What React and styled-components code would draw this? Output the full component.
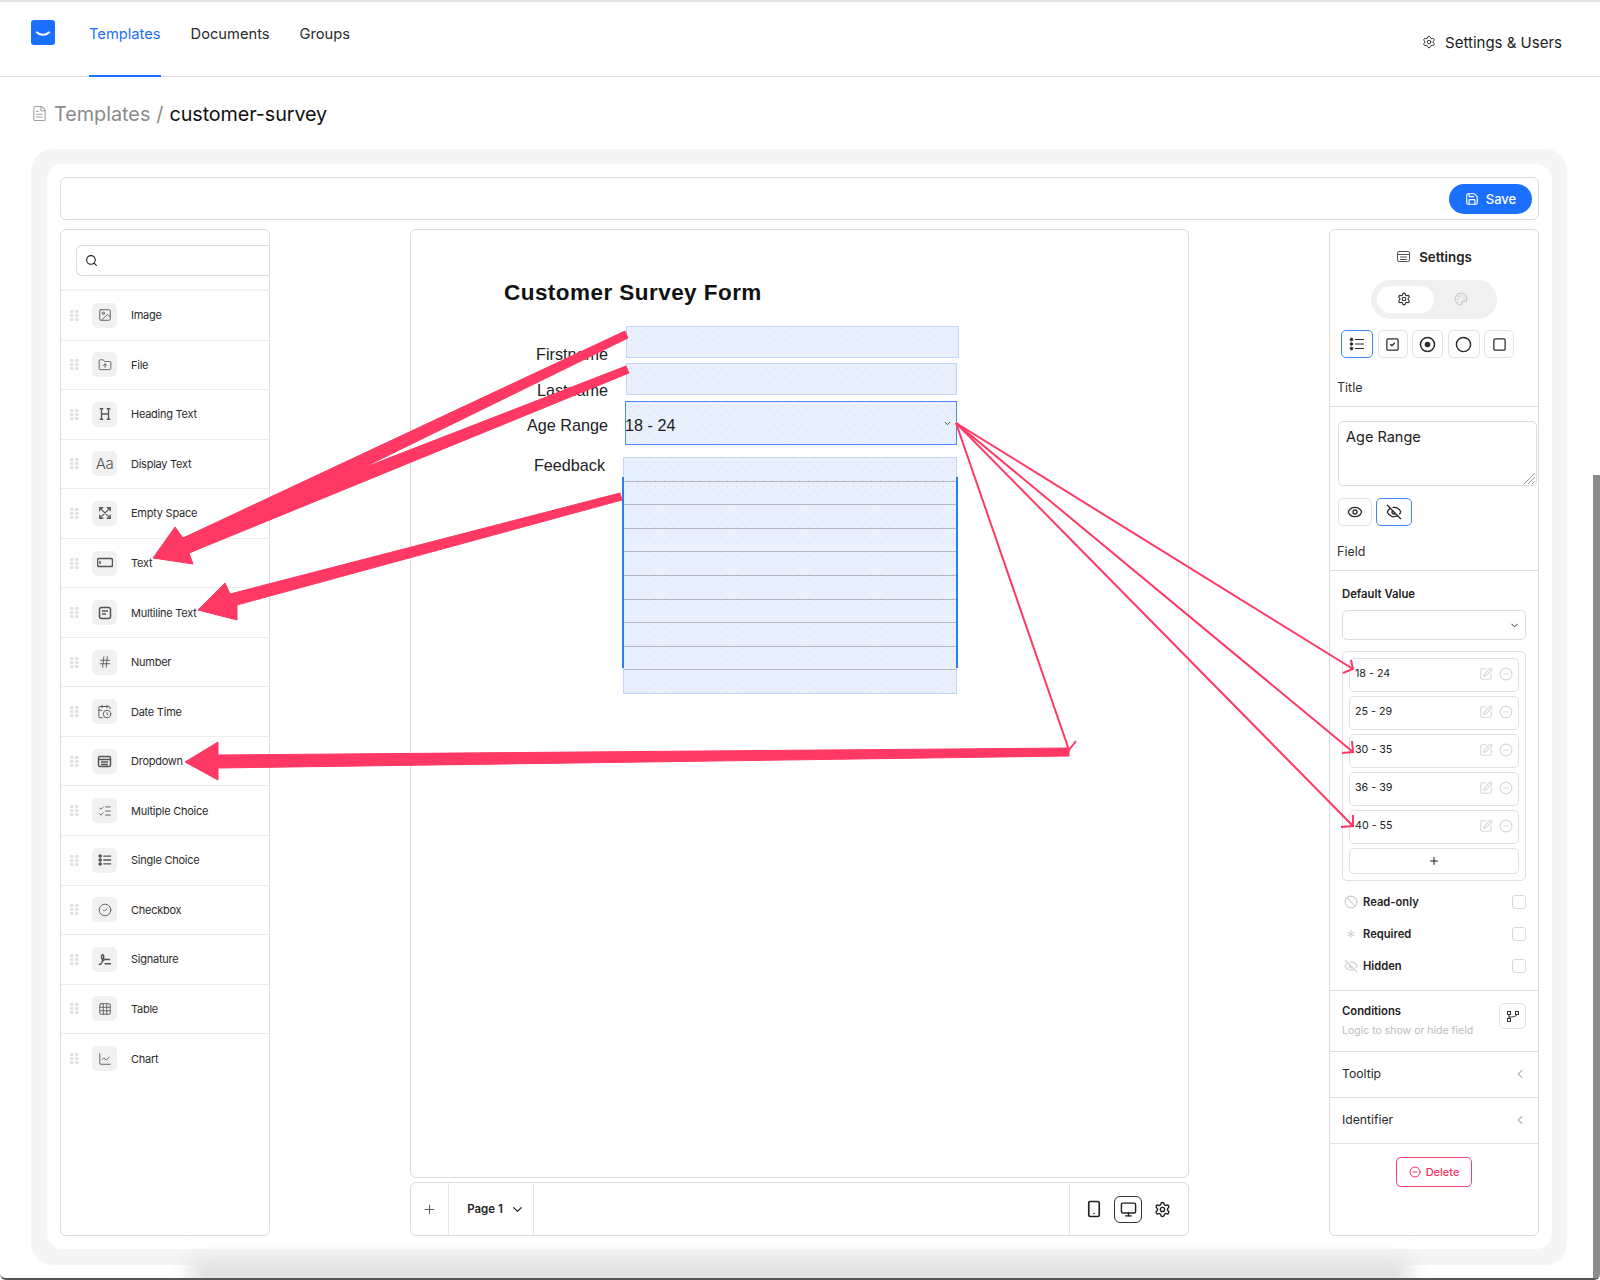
import styled, { createGlobalStyle } from 'styled-components';
import {
    Asterisk, Ban, CalendarClock, ChevronDown, ChevronLeft, Circle, CircleCheck,
    CircleMinus, Eye, EyeOff, FileText, FolderUp, Grid3x3, Hash,
    Image, LineChart, ListChecks, Monitor, Palette, Plus, Save, Search, Settings,
    Smartphone, Square, SquareCheck, SquarePen
} from 'lucide-react';

const GlobalStyle = createGlobalStyle`
    html, body {
        margin: 0;
        height: 1280px;
        overflow: hidden;
        background: white;
        font-family: Inter, "Liberation Sans", sans-serif;
        color: #1c1c1c;
    }
    * { box-sizing: border-box; }
`;

const Page = styled.div`
    position: relative;
    width: 1600px;
    height: 1280px;
    overflow: hidden;
    border-top: 2px solid #e6e6e6;
    border-bottom: 2px solid #555;
    border-radius: 0 0 6px 6px;
`;

const Header = styled.header`
    height: 75px;
    padding: 0 38px 0 31px;
    display: flex;
    justify-content: space-between;
    border-bottom: 1px solid #dfdfdf;
`;

const Left = styled.div`
    display: flex;
    gap: 30px;
`;

const Logo = styled.svg`
    width: 24px;
    height: 25px;
    margin: 18px 4px 0 0;
`;

const NavLink = styled.a`
    height: 75px;
    padding-top: 22px;
    font-size: 14.7px;
    line-height: 20px;
    color: ${p => (p.$active ? '#1a6fff' : '#2a2a2a')};
    border-bottom: 2px solid ${p => (p.$active ? '#1a6fff' : 'transparent')};
`;

const SettingsLink = styled.div`
    display: flex;
    align-items: center;
    gap: 9px;
    height: 24px;
    margin-top: 28px;
    font-size: 15px;
    svg { stroke-width: 1.5; }
`;

const Breadcrumb = styled.div`
    height: 72px;
    padding: 23px 0 0 31px;
    display: flex;
    align-items: flex-start;
    gap: 6px;
    font-size: 19.8px;
    line-height: 28px;
    color: #8b8b8b;

    svg { margin-top: 5px; color: #a0a0a0; stroke-width: 1.5; }
    b { font-weight: 400; color: #111; letter-spacing: -0.1px; }
`;

const OuterCard = styled.div`
    margin: 0 33px 0 31px;
    height: 1116px;
    padding: 15px 15px 16px 16px;
    background: #f5f5f5;
    border-radius: 22px;
`;

const InnerCard = styled.div`
    height: 100%;
    padding: 13px;
    background: white;
    border-radius: 16px;
    display: flex;
    flex-direction: column;
    gap: 9px;
`;

const Toolbar = styled.div`
    height: 43px;
    flex: none;
    border: 1px solid #dcdcdc;
    border-radius: 6px;
    display: flex;
    justify-content: flex-end;
    align-items: center;
    padding-right: 6px;
`;

const SaveButton = styled.button`
    width: 83px;
    height: 30px;
    border: 0;
    border-radius: 15px;
    background: #1a6fff;
    color: white;
    font: 500 13px Inter, sans-serif;
    display: flex;
    align-items: center;
    justify-content: center;
    gap: 7px;
`;

const Columns = styled.div`
    flex: 1;
    display: flex;
    justify-content: space-between;
    min-height: 0;
`;

const Panel = styled.aside`
    width: 210px;
    border: 1px solid #dcdcdc;
    border-radius: 6px;
    background: white;
`;

const SearchWrap = styled.div`
    height: 61px;
    padding: 15px 0 0 15px;
    border-bottom: 2px solid #f3f3f3;
`;

const SearchBox = styled.div`
    height: 31px;
    display: flex;
    align-items: center;
    padding-left: 8px;
    border: 1px solid #dcdcdc;
    border-right: 0;
    border-radius: 6px 0 0 6px;
`;

const FieldRow = styled.div`
    height: 49.55px;
    padding-left: 9px;
    display: flex;
    align-items: center;
    border-bottom: 1px solid #ececec;
    font-size: 11px;
    letter-spacing: -0.25px;
    color: #2b2b2b;

    &:last-child { border-bottom: 0; }
`;

const Handle = styled.svg`
    width: 9px;
    height: 11px;
    flex: none;
`;

const FieldIcon = styled.span`
    width: 25px;
    height: 25px;
    margin: 0 14px 0 13px;
    border-radius: 5px;
    background: #f1f1f1;
    color: #555;
    display: flex;
    align-items: center;
    justify-content: center;
    font-size: 15px;
    font-weight: 300;
    letter-spacing: -0.5px;
    svg { stroke-width: 1.5; }
`;

const Middle = styled.div`
    width: 779px;
    display: flex;
    flex-direction: column;
    gap: 4px;
`;

const Canvas = styled.div`
    position: relative;
    flex: 1;
    border: 1px solid #dcdcdc;
    border-radius: 6px;
    font-family: "Liberation Sans", Arial, sans-serif;
`;

const FormTitle = styled.div`
    position: absolute;
    left: 93px;
    top: 49px;
    font-size: 22.5px;
    line-height: 28px;
    font-weight: 700;
    color: #111;
    letter-spacing: 0.45px;
`;

const FormLabel = styled.div`
    position: absolute;
    right: ${p => p.$right}px;
    top: ${p => p.$top}px;
    font-size: 16.2px;
    line-height: 20px;
    color: #222;
`;

const dots = `
    background-image: radial-gradient(#ccd5e6 0.6px, transparent 0.8px);
    background-size: 9px 9px;
`;

const FormField = styled.div`
    position: absolute;
    left: ${p => p.$x}px;
    top: ${p => p.$y}px;
    width: ${p => p.$w}px;
    height: ${p => p.$h}px;
    background-color: #e9f0fd;
    ${dots}
    border: ${p => (p.$focus ? '1.5px solid #4a87f0' : '1.5px solid #c3d5fb')};
    font-size: 16.2px;
    display: flex;
    align-items: center;
    justify-content: space-between;
`;

const AgeValue = styled.span`
    margin: 5px 0 0 -1px;
`;

const AgeChevron = styled(ChevronDown)`
    margin-right: 4px;
`;

const MultiLine = styled.div`
    position: absolute;
    left: 212px;
    top: 227px;
    width: 334px;
    height: 237px;
    display: flex;
    flex-direction: column;
    background: #e9f0fd;
    border: 1.5px solid #c3d5fb;

    &::before, &::after {
        content: "";
        position: absolute;
        top: 19px;
        width: 2px;
        height: 191px;
        background: #2f7bf0;
    }
    &::before { left: -2px; }
    &::after { right: -2px; }
`;

const MultiLineCell = styled.div`
    flex: 1;
    ${dots}
    border-bottom: 1.5px solid #b6b8bd;

    &:last-child { border-bottom: 0; }
`;

const PageBar = styled.div`
    height: 54px;
    flex: none;
    border: 1px solid #dcdcdc;
    border-radius: 6px;
    display: flex;
    align-items: stretch;
`;

const BarCell = styled.div`
    display: flex;
    align-items: center;
    justify-content: center;
    gap: ${p => p.$gap || 0}px;
    width: ${p => p.$w}px;
    padding: ${p => p.$pad || 0};
    flex: ${p => (p.$grow ? 1 : 'none')};
    border-right: ${p => (p.$line ? '1px solid #e6e6e6' : 0)};
    font-size: 11.5px;
    font-weight: 600;
    color: #555;
    b { color: #222; font-weight: 600; }
`;

const ViewButton = styled.span`
    width: 28px;
    height: 27px;
    display: flex;
    align-items: center;
    justify-content: center;
    color: #222;
    border: ${p => (p.$boxed ? '1px solid #333' : 0)};
    border-radius: 6px;
`;

const SettingsPanel = styled(Panel)`
    font-size: 13px;
`;

const SettingsTitle = styled.div`
    height: 50px;
    padding-top: 19px;
    display: flex;
    justify-content: center;
    gap: 8px;
    font-size: 13.3px;
    line-height: 16px;
    font-weight: 600;
    color: #222;
    svg { color: #555; }
`;

const ModeSwitch = styled.div`
    width: 126px;
    height: 39px;
    margin: 0 auto;
    padding: 6px;
    border-radius: 20px;
    background: #f0f0f0;
    display: flex;
`;

const ModeTab = styled.span`
    width: 57px;
    padding: 0 3px 2px 0;
    border-radius: 14px;
    background: ${p => (p.$active ? 'white' : 'transparent')};
    color: ${p => (p.$active ? '#333' : '#c8c8c8')};
    display: flex;
    align-items: center;
    justify-content: center;
`;

const ButtonRow = styled.div`
    display: flex;
    gap: ${p => p.$gap}px;
    margin: ${p => p.$margin};
`;

const IconBtn = styled.span`
    width: ${p => p.$w}px;
    height: 28px;
    border: 1px solid ${p => (p.$on ? '#3d86f5' : '#e3e3e3')};
    border-radius: 5px;
    display: flex;
    align-items: center;
    justify-content: center;
    color: #2a2a2a;
`;

const SectionLabel = styled.div`
    height: ${p => p.$h}px;
    padding: ${p => p.$pad}px 0 0 7px;
    font-size: 12.5px;
    line-height: 16px;
    color: #333;
    border-bottom: 1px solid #dedede;
`;

const TitleArea = styled.div`
    position: relative;
    height: 65px;
    margin: 14px 1px 0 8px;
    padding: 5px 7px;
    border: 1px solid #dcdcdc;
    border-radius: 5px;
    font-size: 14.5px;
    line-height: 20px;
    color: #222;
`;

const ResizeGrip = styled.svg`
    position: absolute;
    right: 1px;
    bottom: 1px;
    width: 12px;
    height: 12px;
`;

const FieldSection = styled.div`
    padding: 15px 12px 0 12px;
`;

const BoldLabel = styled.div`
    font-size: 11.3px;
    line-height: 16px;
    font-weight: 600;
    color: #222;
`;

const SelectBox = styled.div`
    height: 30px;
    margin-top: 8px;
    padding-right: 5px;
    border: 1px solid #dcdcdc;
    border-radius: 5px;
    display: flex;
    align-items: center;
    justify-content: flex-end;
`;

const OptionsBox = styled.div`
    height: 230px;
    margin-top: 11px;
    padding: 6px;
    border: 1px solid #e0e0e0;
    border-radius: 5px;
    display: flex;
    flex-direction: column;
    gap: 4px;
`;

const OptionRow = styled.div`
    height: 34px;
    flex: none;
    padding: 0 5px 3px 5px;
    border: 1px solid #e0e0e0;
    border-radius: 5px;
    display: flex;
    align-items: center;
    gap: 6px;
    font-size: 10.7px;
    color: #222;
    span { flex: 1; }
    svg { color: #d8d8d8; }
`;

const AddOption = styled.div`
    height: 27px;
    border: 1px solid #e0e0e0;
    border-radius: 5px;
    display: flex;
    align-items: center;
    justify-content: center;
`;

const FlagList = styled.div`
    padding: 13px 12px 16px 14px;
    border-bottom: 1px solid #dedede;
    display: flex;
    flex-direction: column;
    gap: 16px;
`;

const Flag = styled.div`
    height: 16px;
    display: flex;
    align-items: center;
    gap: 5px;
    font-size: 11.2px;
    font-weight: 600;
    color: #222;
    svg { color: #d0d0d0; flex: none; }
    span { flex: 1; }
`;

const CheckBox = styled.i`
    width: 14px;
    height: 14px;
    border: 1px solid #d8d8d8;
    border-radius: 3px;
`;

const Conditions = styled.div`
    height: 61px;
    padding: 12px 12px 0 12px;
    border-bottom: 1px solid #dedede;
    display: flex;
    justify-content: space-between;
`;

const Hint = styled.div`
    margin-top: 5px;
    font-size: 10.5px;
    line-height: 14px;
    color: #bcbcbc;
`;

const ConditionButton = styled.span`
    width: 27px;
    height: 26px;
    border: 1px solid #e3e3e3;
    border-radius: 5px;
    display: flex;
    align-items: center;
    justify-content: center;
`;

const Collapse = styled.div`
    height: 46px;
    padding: 0 11px 2px 12px;
    border-bottom: 1px solid #dedede;
    display: flex;
    align-items: center;
    justify-content: space-between;
    font-size: 12.2px;
    color: #2a2a2a;
    svg { color: #b5b5b5; }
`;

const DeleteButton = styled.button`
    display: flex;
    align-items: center;
    justify-content: center;
    gap: 5px;
    width: 76px;
    height: 30px;
    margin: 13px auto 0;
    background: white;
    border: 1px solid #ff3c6e;
    border-radius: 5px;
    color: #ff2f63;
    font: 500 11px Inter, sans-serif;
`;

const Arrows = styled.svg`
    position: absolute;
    left: 0;
    top: -2px;
    width: 1600px;
    height: 1280px;
    pointer-events: none;
`;

const ScrollThumb = styled.div`
    position: absolute;
    right: 0;
    top: 473px;
    width: 7px;
    height: 805px;
    background: #8c8c8c;
`;

const BottomHaze = styled.div`
    position: absolute;
    left: 190px;
    right: 190px;
    bottom: -8px;
    height: 24px;
    background: #dadada;
    filter: blur(10px);
    pointer-events: none;
`;

const Grip = () => (
    <Handle viewBox="0 0 9 11" fill="#e0e0e0">
        <rect width="3.5" height="3" rx="1" />
        <rect x="5" width="3.5" height="3" rx="1" />
        <rect y="4" width="3.5" height="3" rx="1" />
        <rect x="5" y="4" width="3.5" height="3" rx="1" />
        <rect y="8" width="3.5" height="3" rx="1" />
        <rect x="5" y="8" width="3.5" height="3" rx="1" />
    </Handle>
);

const PanelGlyph = () => (
    <svg width="15" height="15" viewBox="0 0 15 15" fill="none" stroke="currentColor">
        <rect x="1.500" y="2.500" width="12" height="10" rx="1.500" />
        <path d="M1.500 5.500h12M4 8h7M4 10.500h7" />
    </svg>
);

const BulletGlyph = ({ size }) => (
    <svg width={size} height={size} viewBox="0 0 16 16" fill="none" stroke="currentColor">
        <circle cx="2.500" cy="3.500" r="1.300" fill="currentColor" />
        <circle cx="2.500" cy="8" r="1.300" fill="currentColor" />
        <circle cx="2.500" cy="12.500" r="1.300" fill="currentColor" />
        <path d="M6 3.500h9M6 8h9M6 12.500h9" />
    </svg>
);

const fields = [
    ['Image', <Image size={14} />],
    ['File', <FolderUp size={14} />],
    ['Heading Text', (
        <svg width="14" height="14" viewBox="0 0 16 16" fill="none" stroke="currentColor" strokeWidth="1.300">
            <path d="M4 2v12M12 2v12M4 8h8M2 2h4M10 2h4M2 14h4M10 14h4" />
        </svg>
    )],
    ['Display Text', 'Aa'],
    ['Empty Space', (
        <svg width="14" height="14" viewBox="0 0 16 16" fill="none" stroke="currentColor">
            <path d="M3 3l10 10M13 3L3 13M2 6V2h4M10 2h4v4M14 10v4h-4M6 14H2v-4" />
        </svg>
    )],
    ['Text', (
        <svg width="16" height="16" viewBox="0 0 16 16" fill="none" stroke="currentColor">
            <rect x="0.500" y="3.500" width="15" height="8" rx="1.500" />
            <path d="M3 6v3" />
        </svg>
    )],
    ['Multiline Text', (
        <svg width="14" height="14" viewBox="0 0 14 14" fill="none" stroke="currentColor">
            <rect x="1.500" y="1.500" width="11" height="11" rx="2" />
            <path d="M4 5h6M4 8h4" />
        </svg>
    )],
    ['Number', <Hash size={14} />],
    ['Date Time', <CalendarClock size={15} />],
    ['Dropdown', <PanelGlyph />],
    ['Multiple Choice', <ListChecks size={14} />],
    ['Single Choice', <BulletGlyph size={14} />],
    ['Checkbox', <CircleCheck size={14} />],
    ['Signature', (
        <svg width="15" height="15" viewBox="0 0 16 16" fill="none" stroke="currentColor">
            <path d="M2 13c2 1 3-1 4-4s2-6 0-6-1 5 0 6 2-1 3-2M9 8h5M8 12.500h7" />
        </svg>
    )],
    ['Table', <Grid3x3 size={14} />],
    ['Chart', <LineChart size={14} />],
];

const options = ['18 - 24', '25 - 29', '30 - 35', '36 - 39', '40 - 55'];
const cells = Array.from({ length: 10 });

const App = () => {
    return (
        <Page>
            <GlobalStyle />
            <Header>
                <Left>
                    <Logo viewBox="0 0 24 25">
                        <rect width="24" height="25" rx="3" fill="#1a6fff" />
                        <path d="M6 12.500c3.500 3 8.500 3 12 0" fill="none" stroke="white" strokeWidth="2.200" strokeLinecap="round" />
                    </Logo>
                    <NavLink $active>Templates</NavLink>
                    <NavLink>Documents</NavLink>
                    <NavLink>Groups</NavLink>
                </Left>
                <SettingsLink><Settings size={14} />Settings &amp; Users</SettingsLink>
            </Header>
            <Breadcrumb>
                <FileText size={17} />
                <span>Templates</span>
                <span>/</span>
                <b>customer-survey</b>
            </Breadcrumb>
            <OuterCard>
                <InnerCard>
                    <Toolbar><SaveButton><Save size={14} />Save</SaveButton></Toolbar>
                    <Columns>
                        <Panel>
                            <SearchWrap>
                                <SearchBox><Search size={13} /></SearchBox>
                            </SearchWrap>
                            {fields.map(([name, icon]) => (
                                <FieldRow key={name}>
                                    <Grip />
                                    <FieldIcon>{icon}</FieldIcon>
                                    {name}
                                </FieldRow>
                            ))}
                        </Panel>
                        <Middle>
                            <Canvas>
                                <FormTitle>Customer Survey Form</FormTitle>
                                <FormLabel $right={580} $top={114}>Firstname</FormLabel>
                                <FormLabel $right={580} $top={150}>Lastname</FormLabel>
                                <FormLabel $right={580} $top={185}>Age Range</FormLabel>
                                <FormLabel $right={583} $top={225}>Feedback</FormLabel>
                                <FormField $x={215} $y={96} $w={333} $h={32} />
                                <FormField $x={215} $y={133} $w={331} $h={32} />
                                <FormField $x={214} $y={171} $w={332} $h={44} $focus>
                                    <AgeValue>18 - 24</AgeValue>
                                    <AgeChevron size={9} />
                                </FormField>
                                <MultiLine>
                                    {cells.map((_, i) => <MultiLineCell key={i} />)}
                                </MultiLine>
                            </Canvas>
                            <PageBar>
                                <BarCell $w={38} $line><Plus size={15} strokeWidth={1.500} /></BarCell>
                                <BarCell $w={85} $gap={7} $pad="0 0 0 10px" $line><b>Page 1</b><ChevronDown size={15} color="#222" /></BarCell>
                                <BarCell $grow $line />
                                <BarCell $w={118} $gap={6} $pad="0 2px 0 0">
                                    <ViewButton><Smartphone size={18} strokeWidth={2.200} /></ViewButton>
                                    <ViewButton $boxed><Monitor size={17} /></ViewButton>
                                    <ViewButton><Settings size={17} /></ViewButton>
                                </BarCell>
                            </PageBar>
                        </Middle>
                        <SettingsPanel>
                            <SettingsTitle><PanelGlyph />Settings</SettingsTitle>
                            <ModeSwitch>
                                <ModeTab $active><Settings size={14} /></ModeTab>
                                <ModeTab><Palette size={14} /></ModeTab>
                            </ModeSwitch>
                            <ButtonRow $gap={4.500} $margin="11px 0 0 11px">
                                <IconBtn $w={32} $on><BulletGlyph size={16} /></IconBtn>
                                <IconBtn $w={30}><SquareCheck size={15} /></IconBtn>
                                <IconBtn $w={31}>
                                    <svg width="17" height="17" viewBox="0 0 17 17" fill="none" stroke="currentColor" strokeWidth="1.500">
                                        <circle cx="8.500" cy="8.500" r="7" />
                                        <circle cx="8.500" cy="8.500" r="2.800" fill="currentColor" stroke="none" />
                                    </svg>
                                </IconBtn>
                                <IconBtn $w={32}><Circle size={17} /></IconBtn>
                                <IconBtn $w={30}><Square size={15} /></IconBtn>
                            </ButtonRow>
                            <SectionLabel $h={49} $pad={22}>Title</SectionLabel>
                            <TitleArea>
                                Age Range
                                <ResizeGrip viewBox="0 0 12 12" fill="none" stroke="#999">
                                    <path d="M1 12L12 1M5 12l7-7M9 12l3-3" />
                                </ResizeGrip>
                            </TitleArea>
                            <ButtonRow $gap={4} $margin="12px 0 0 8px">
                                <IconBtn $w={34}><Eye size={16} /></IconBtn>
                                <IconBtn $w={36} $on><EyeOff size={16} /></IconBtn>
                            </ButtonRow>
                            <SectionLabel $h={45} $pad={18}>Field</SectionLabel>
                            <FieldSection>
                                <BoldLabel>Default Value</BoldLabel>
                                <SelectBox><ChevronDown size={11} /></SelectBox>
                                <OptionsBox>
                                    {options.map(option => (
                                        <OptionRow key={option}>
                                            <span>{option}</span>
                                            <SquarePen size={14} />
                                            <CircleMinus size={14} />
                                        </OptionRow>
                                    ))}
                                    <AddOption><Plus size={12} /></AddOption>
                                </OptionsBox>
                            </FieldSection>
                            <FlagList>
                                <Flag><Ban size={14} /><span>Read-only</span><CheckBox /></Flag>
                                <Flag><Asterisk size={14} /><span>Required</span><CheckBox /></Flag>
                                <Flag><EyeOff size={14} /><span>Hidden</span><CheckBox /></Flag>
                            </FlagList>
                            <Conditions>
                                <div>
                                    <BoldLabel>Conditions</BoldLabel>
                                    <Hint>Logic to show or hide field</Hint>
                                </div>
                                <ConditionButton>
                                    <svg width="12" height="12" viewBox="0 0 12 12" fill="none" stroke="#333">
                                        <rect x="0.500" y="1.500" width="3" height="3" />
                                        <rect x="8.500" y="1.500" width="3" height="3" />
                                        <rect x="0.500" y="8.500" width="3" height="3" />
                                        <path d="M2 4.500v4M2 7c3 0 7 0 8-2.500" />
                                    </svg>
                                </ConditionButton>
                            </Conditions>
                            <Collapse>Tooltip<ChevronLeft size={14} /></Collapse>
                            <Collapse>Identifier<ChevronLeft size={14} /></Collapse>
                            <DeleteButton><CircleMinus size={12} />Delete</DeleteButton>
                        </SettingsPanel>
                    </Columns>
                </InnerCard>
            </OuterCard>
            <BottomHaze />
            <ScrollThumb />
            <Arrows viewBox="0 0 1600 1280">
                <g fill="#ff3864" stroke="#ff3864" strokeLinejoin="round">
                    <path d="M625 331L628 338L189 553L193 564L153 558L175 527L183 538Z" />
                    <path d="M626 366L629 373L189 553L183 538Z" />
                    <path d="M620 493L622 500L237 605L237 620L198 610L225 583L230 594Z" />
                    <path d="M1069 748L1069 756L218 768L218 780L185 762L218 742L218 755Z" />
                </g>
                <g fill="none" stroke="#ff3864" strokeWidth="2">
                    <path d="M956 423L1353 669M1343 673L1353 669L1351 660" />
                    <path d="M956 423L1353 752M1342 753L1353 752L1352 741" />
                    <path d="M956 423L1353 826M1341 827L1353 826L1353 815" />
                    <path d="M956 423L1069 750L1076 741" />
                </g>
            </Arrows>
        </Page>
    );
};

export default App;
